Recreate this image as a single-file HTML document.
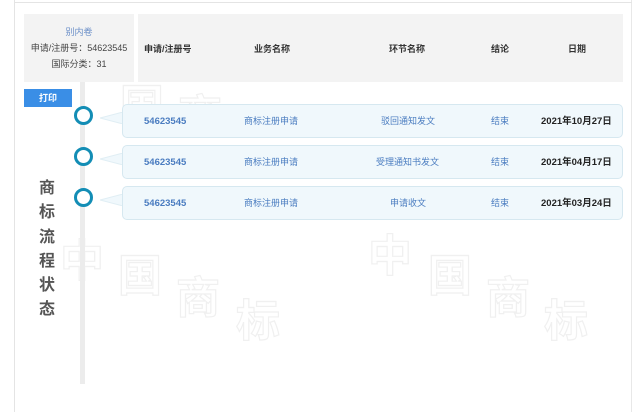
<!DOCTYPE html>
<html><head><meta charset="utf-8"><style>
*{margin:0;padding:0;box-sizing:border-box}
body{width:640px;height:412px;background:#fff;position:relative;overflow:hidden;font-family:"Liberation Sans","Noto Sans CJK SC",sans-serif;font-size:8px;color:#333}
.abs{position:absolute}
.wm{position:absolute;font-size:44px;color:#fff;-webkit-text-stroke:1.2px #f0f0f0;font-weight:bold;font-family:"Noto Sans CJK SC",sans-serif}
.row{position:absolute;left:122px;width:501px;height:34px;background:#f0f8fc;border:1px solid #d6e8f0;border-radius:5px}
.row span{position:absolute;top:10px;color:#4a7cc0;font-size:9px;line-height:13px}
.row span.n{font-size:9.5px;font-weight:bold}
.row span.d{color:#222;font-weight:bold;font-size:9.5px;left:418px}
.tail{position:absolute;left:100px;width:24px;height:12px}
.c{position:absolute;left:74px;width:19px;height:19px;border:3px solid #138db5;border-radius:50%;background:#fff}
.h{position:absolute;top:42px;font-weight:bold;font-size:9px;color:#333}
</style></head><body>
<div class="abs" style="left:14px;top:0;width:1px;height:412px;background:#e4e4e4"></div>
<div class="abs" style="left:631px;top:0;width:1px;height:412px;background:#e8e8e8"></div>
<div class="abs" style="left:14px;top:2px;width:618px;height:1px;background:#e4e4e4"></div>

<div class="wm" style="left:60px;top:225px">中</div>
<div class="wm" style="left:118px;top:240px">国</div>
<div class="wm" style="left:176px;top:262px">商</div>
<div class="wm" style="left:236px;top:285px">标</div>
<div class="wm" style="left:368px;top:220px">中</div>
<div class="wm" style="left:428px;top:240px">国</div>
<div class="wm" style="left:486px;top:262px">商</div>
<div class="wm" style="left:544px;top:285px">标</div>
<div class="wm" style="left:120px;top:70px">国</div>
<div class="wm" style="left:178px;top:80px">商</div>

<div class="abs" style="left:24px;top:14px;width:110px;height:68px;background:#f3f3f3;text-align:center;font-size:9px;line-height:16px;padding-top:10px;color:#444">
<div style="color:#6b8fc8">别内卷</div><div>申请/注册号：54623545</div><div>国际分类：31</div></div>
<div class="abs" style="left:138px;top:14px;width:485px;height:68px;background:#f3f3f3"></div>
<div class="h" style="left:144px">申请/注册号</div>
<div class="h" style="left:254px">业务名称</div>
<div class="h" style="left:389px">环节名称</div>
<div class="h" style="left:491px">结论</div>
<div class="h" style="left:568px">日期</div>

<div class="abs" style="left:24px;top:89px;width:48px;height:18px;background:#3a8ee6;color:#fff;font-weight:bold;text-align:center;line-height:18px;font-size:9px">打印</div>
<div class="abs" style="left:80px;top:82px;width:5px;height:302px;background:#ececec"></div>

<div class="abs" style="left:37px;top:174px;width:20px;font-size:16px;font-weight:bold;color:#555;line-height:24.3px;text-align:center;font-family:'Noto Sans CJK SC',sans-serif">商<br>标<br>流<br>程<br>状<br>态</div>

<svg class="tail" style="top:112px" viewBox="0 0 24 12"><path d="M0 6 L23 0 L23 12 Z" fill="#f0f8fc" stroke="#e0eef4"/></svg>
<svg class="tail" style="top:153px" viewBox="0 0 24 12"><path d="M0 6 L23 0 L23 12 Z" fill="#f0f8fc" stroke="#e0eef4"/></svg>
<svg class="tail" style="top:194px" viewBox="0 0 24 12"><path d="M0 6 L23 0 L23 12 Z" fill="#f0f8fc" stroke="#e0eef4"/></svg>

<div class="row" style="top:104px"><span class="n" style="left:21px">54623545</span><span style="left:121px">商标注册申请</span><span style="left:258px">驳回通知发文</span><span style="left:368px">结束</span><span class="d">2021年10月27日</span></div>
<div class="row" style="top:145px"><span class="n" style="left:21px">54623545</span><span style="left:121px">商标注册申请</span><span style="left:253px">受理通知书发文</span><span style="left:368px">结束</span><span class="d">2021年04月17日</span></div>
<div class="row" style="top:186px"><span class="n" style="left:21px">54623545</span><span style="left:121px">商标注册申请</span><span style="left:267px">申请收文</span><span style="left:368px">结束</span><span class="d">2021年03月24日</span></div>

<div class="c" style="top:106px"></div>
<div class="c" style="top:147px"></div>
<div class="c" style="top:188px"></div>
</body></html>
